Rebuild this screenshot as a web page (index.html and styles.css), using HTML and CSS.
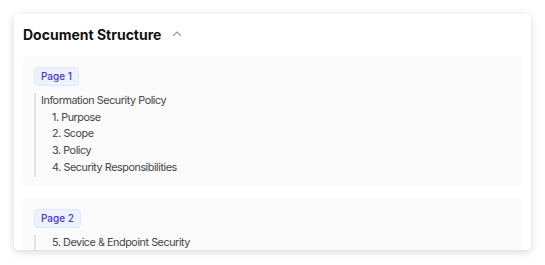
FILE: index.html
```html
<html>
<head>
<title>Document Structure</title>
<link rel="stylesheet" href="styles.css">
</head>
<body>

<div class="card">
    <div class="card-head">
        <h2>Document Structure</h2>
        <svg class="chevron" width="10" height="8" viewBox="0 0 10 8"><path d="M1.5 5.5 L5 2 L8.5 5.5" fill="none" stroke="#9a9a9a" stroke-width="1.1" stroke-linecap="round" stroke-linejoin="round"/></svg>
    </div>

    <div class="page">
        <span class="badge">Page 1</span>
        <ul class="outline">
            <li>Information Security Policy</li>
            <li class="sub">1. Purpose</li>
            <li class="sub">2. Scope</li>
            <li class="sub">3. Policy</li>
            <li class="sub">4. Security Responsibilities</li>
        </ul>
    </div>

    <div class="page">
        <span class="badge">Page 2</span>
        <ul class="outline">
            <li class="sub">5. Device &amp; Endpoint Security</li>
        </ul>
    </div>
</div>

</body>
</html>
```

FILE: styles.css
```css
body { margin: 0; font-family: Inter, "Noto Sans", sans-serif; background: #fff; }
.card { margin: 14px; width: 517px; height: 236px; box-sizing: border-box; padding: 8px 9px; background: #fff; border-radius: 5px; box-shadow: 0 2px 8px rgba(0,0,0,0.16); overflow: hidden; }
.card-head { display: flex; align-items: center; gap: 11px; height: 24px; margin-bottom: 10px; }
.card-head h2 { margin: 0; font-size: 14px; font-weight: 700; color: #111; }
.page { background: #fafafa; border-radius: 5px; padding: 11px 11px 9px; margin-bottom: 12px; }
.badge { display: inline-block; padding: 1px 6px; font-size: 10px; line-height: 15px; color: #4338ca; background: #eef2ff; border: 1px solid #e0e7ff; border-radius: 4px; font-weight: 500; }
.outline { list-style: none; margin: 7px 0 0; padding: 0 0 0 5px; border-left: 2px solid #e3e3e3; }
.outline li { font-size: 10.8px; letter-spacing: -0.45px; line-height: 16.7px; color: #454545; }
.outline li.sub { padding-left: 11px; }
```
